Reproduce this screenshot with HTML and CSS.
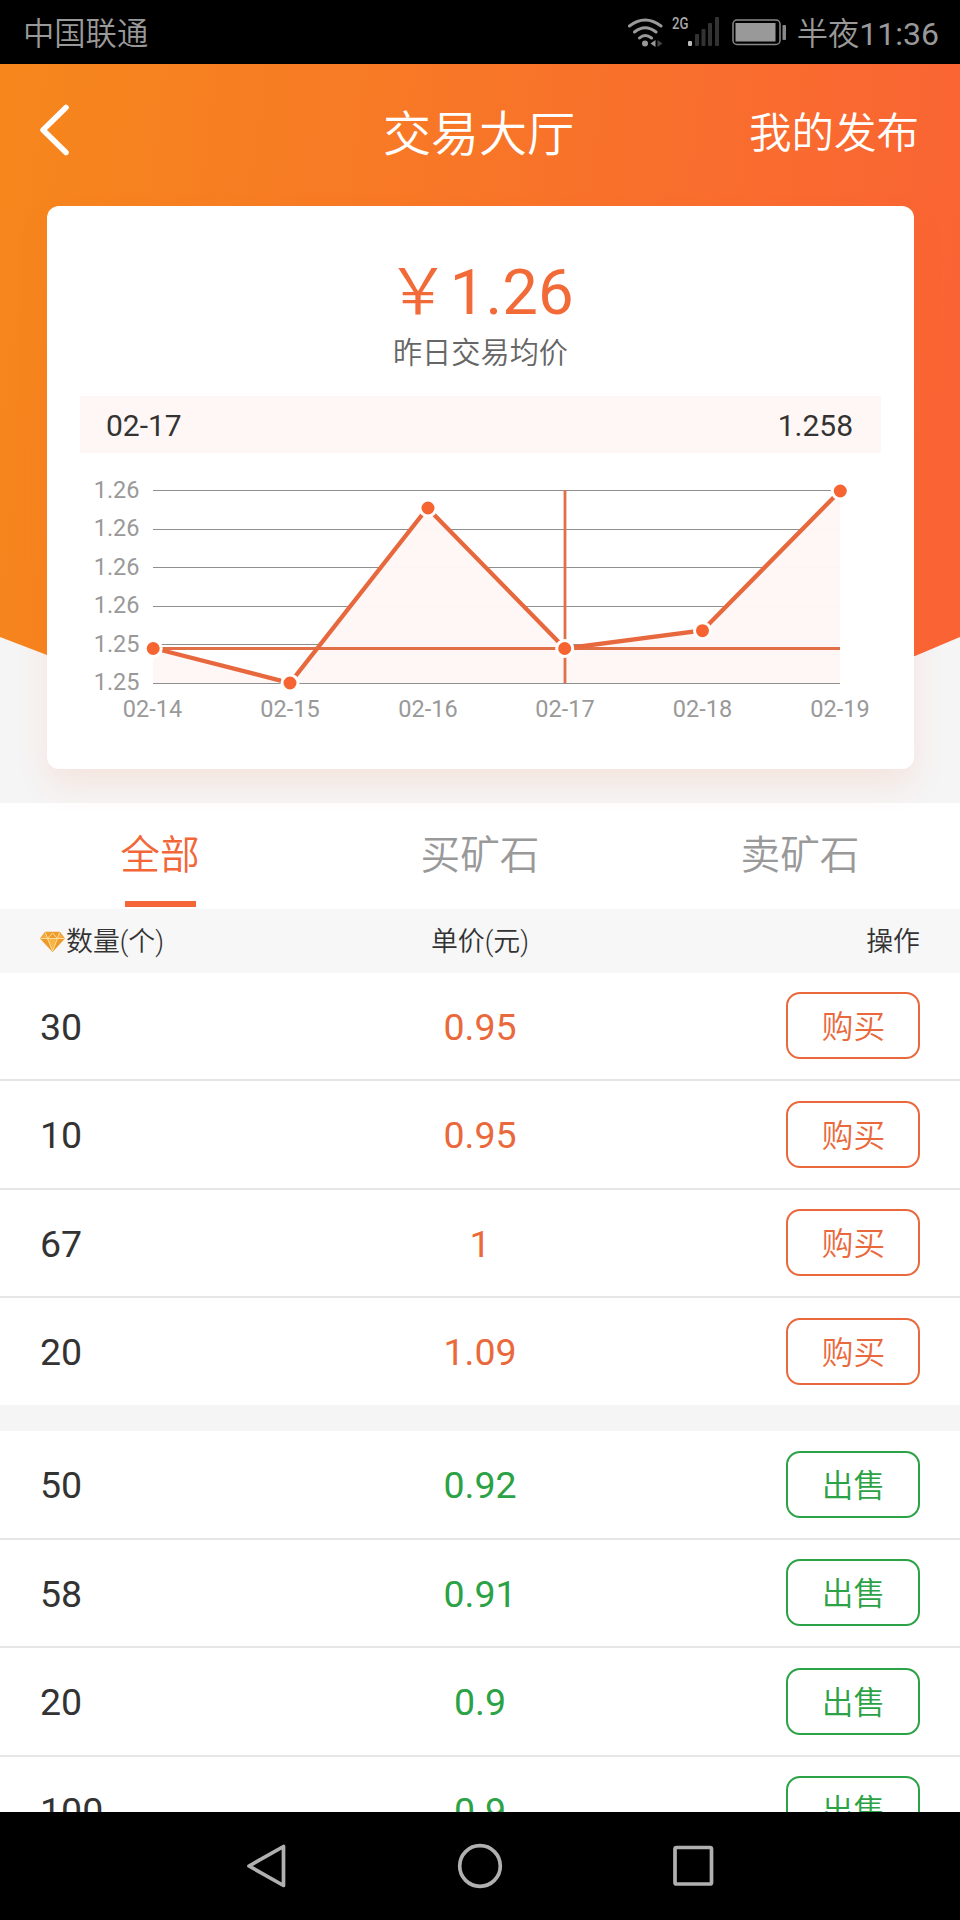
FILE: index.html
```
<!DOCTYPE html>
<html lang="zh-CN">
<head>
<meta charset="utf-8">
<title>交易大厅</title>
<link rel="stylesheet" href="styles.css">
</head>
<body>
<div class="screen">
  <div class="status">
    <span class="carrier">中国联通</span>
    <svg class="wifi" width="38" height="32" viewBox="0 0 38 32" fill="none" stroke="#999" stroke-width="3" stroke-linecap="round">
      <path d="M2.500 9Q18 -3 34 9M7.500 15Q18 6.500 29 15M12.500 21Q18 16 24.500 21"/>
      <circle cx="18" cy="26.500" r="3" fill="#999" stroke="none"/>
      <path d="M28.500 23v7l-5-3.500z" fill="#999" stroke="none"/>
      <path d="M30.500 23v7l5-3.500z" fill="#444" stroke="none"/>
    </svg>
    <span class="net">2G</span>
    <svg class="signal" width="32" height="32" viewBox="0 0 32 32" fill="#333">
      <rect x="0" y="25" width="4" height="5" rx="1" fill="#bbb"/>
      <rect x="7" y="18" width="4" height="12" rx="1"/>
      <rect x="13.500" y="13" width="4" height="17" rx="1"/>
      <rect x="20" y="7" width="4" height="23" rx="1"/>
      <rect x="27" y="1" width="4" height="29" rx="1"/>
    </svg>
    <svg class="battery" width="56" height="27" viewBox="0 0 56 27">
      <rect x="1" y="1" width="47" height="24.500" rx="4" fill="none" stroke="#888" stroke-width="1.500"/>
      <rect x="3.500" y="4" width="40" height="18.500" fill="#999"/>
      <rect x="50.500" y="6" width="3.500" height="15" rx="1" fill="#888"/>
    </svg>
    <span class="clock">半夜<span class="digits">11:36</span></span>
  </div>

  <div class="hero">
    <div class="titlebar">
      <svg class="back" width="34" height="54" viewBox="0 0 34 54" fill="none" stroke="#fff" stroke-width="5.500" stroke-linecap="round" stroke-linejoin="round"><path d="M29 4.500L6 27L29 49.500"/></svg>
      <h1 class="title">交易大厅</h1>
      <span class="mine">我的发布</span>
    </div>
    <div class="card">
      <div class="price"><span class="yen">￥</span>1.26</div>
      <div class="caption">昨日交易均价</div>
      <div class="readout"><span>02-17</span><span>1.258</span></div>
      <svg class="chart" width="866" height="270" viewBox="47 460 866 270">
        <path class="grid" d="M153 490.500H840M153 529.500H840M153 567.500H840M153 606.500H840M153 644.500H840"/>
        <path class="area" d="M153 648L290 683L427.500 508L565 648.500L702.500 630.500L840 491V683H153Z"/>
        <path class="grid" d="M153 683.500H840"/>
        <path class="cross" d="M153 648.500H840M565 490V683"/>
        <path class="line" d="M153 648L290 683L427.500 508L565 648.500L702.500 630.500L840 491"/>
        <g class="dots">
          <circle cx="153.200" cy="648.500" r="8"/><circle cx="290" cy="683" r="8"/><circle cx="428" cy="508" r="8"/>
          <circle cx="564.700" cy="648.500" r="8"/><circle cx="702.500" cy="630.700" r="8"/><circle cx="840.300" cy="491" r="8"/>
        </g>
        <g class="ylab">
          <text x="139.500" y="497.500">1.26</text><text x="139.500" y="536">1.26</text><text x="139.500" y="575">1.26</text>
          <text x="139.500" y="613">1.26</text><text x="139.500" y="651.500">1.25</text><text x="139.500" y="690">1.25</text>
        </g>
        <g class="xlab">
          <text x="152.500" y="716.500">02-14</text><text x="290" y="716.500">02-15</text><text x="428" y="716.500">02-16</text>
          <text x="565" y="716.500">02-17</text><text x="702.500" y="716.500">02-18</text><text x="840" y="716.500">02-19</text>
        </g>
      </svg>
    </div>
  </div>

  <div class="tabs">
    <div class="tab active">全部</div>
    <div class="tab">买矿石</div>
    <div class="tab">卖矿石</div>
  </div>

  <div class="row head">
    <div class="qty">
      <svg class="gem" width="25" height="21" viewBox="0 0 25 21">
        <path d="M5.500 1.500H19.500L24 7.500L12.500 20L1 7.500Z" fill="#ee9a2c" stroke="#ee9a2c" stroke-width="1.500" stroke-linejoin="round"/>
        <path d="M7.500 8H17.500L12.500 20Z" fill="#f8b444"/>
        <path d="M5.500 1.500L1 7.500H7.500ZM19.500 1.500L24 7.500H17.500Z" fill="#f5ab40"/>
        <path d="M1 7.500H24M5.500 1.500L7.500 7.500L12.500 2L17.500 7.500L19.500 1.500M7.500 7.500L12.500 20L17.500 7.500" fill="none" stroke="#fde3a4" stroke-width=".9"/>
      </svg>数量(个)</div>
    <div class="unit">单价(元)</div>
    <div class="op">操作</div>
  </div>

  <div class="list">
    <div class="group buy">
      <div class="row"><div class="qty">30</div><div class="unit">0.95</div><div class="op"><span class="btn">购买</span></div></div>
      <div class="row"><div class="qty">10</div><div class="unit">0.95</div><div class="op"><span class="btn">购买</span></div></div>
      <div class="row"><div class="qty">67</div><div class="unit">1</div><div class="op"><span class="btn">购买</span></div></div>
      <div class="row"><div class="qty">20</div><div class="unit">1.09</div><div class="op"><span class="btn">购买</span></div></div>
    </div>
    <div class="group sell">
      <div class="row"><div class="qty">50</div><div class="unit">0.92</div><div class="op"><span class="btn">出售</span></div></div>
      <div class="row"><div class="qty">58</div><div class="unit">0.91</div><div class="op"><span class="btn">出售</span></div></div>
      <div class="row"><div class="qty">20</div><div class="unit">0.9</div><div class="op"><span class="btn">出售</span></div></div>
      <div class="row"><div class="qty">100</div><div class="unit">0.9</div><div class="op"><span class="btn">出售</span></div></div>
    </div>
  </div>

  <div class="nav">
    <svg width="48" height="48" viewBox="0 0 48 48"><path d="M41.500 4.500V43.500L7 24Z"/></svg>
    <svg width="48" height="48" viewBox="0 0 48 48"><circle cx="24" cy="24" r="20.300"/></svg>
    <svg width="48" height="48" viewBox="0 0 48 48"><rect x="5" y="5.500" width="36.500" height="36.500" rx="1.500"/></svg>
  </div>
</div>
</body>
</html>
```
FILE: styles.css
```
* { box-sizing: border-box; }
body { margin: 0; font-family: Roboto, "Noto Sans CJK SC", sans-serif; color: #333; }
.screen { width: 960px; height: 1920px; display: flex; flex-direction: column; overflow: hidden; background: #f5f5f5; }
.status { height: 64px; flex: none; background: #000; color: #999; display: flex; align-items: center; padding: 0 21px 0 23px; font-size: 31.300px; font-weight: 350; line-height: 62px; }
.carrier { margin-right: auto; padding-top: 5px; }
.wifi { margin: 1px 7px 0 0; }
.net { font: 500 16.500px/16px Roboto, sans-serif; width: 16px; margin-top: -17px; color: #aaa; transform: scaleX(.8); transform-origin: left; }
.signal { margin-right: 12px; }
.battery { margin-right: 9px; }
.clock { padding-top: 4px; }
.digits { font-weight: 400; font-size: 32px; }

.hero { height: 739px; flex: none; position: relative; z-index: 0; }
.hero::before { content: ""; position: absolute; z-index: -1; inset: 0 0 143px; background: linear-gradient(97deg, #f6871c, #fa6434 96%); clip-path: polygon(0 0, 100% 0, 100% 573px, 915px 592px, 50% 100%, 47px 591px, 0 573px); }
.titlebar { height: 142px; display: grid; grid-template-columns: 1fr auto 1fr; align-items: center; padding: 0 41px 0 39px; color: #fff; font-family: "Noto Sans CJK SC", sans-serif; font-weight: 350; }
.back { margin: -10px 0 0 -2px; }
.title { margin: -10px 0 0; font-size: 48px; font-weight: 350; line-height: 60px; }
.mine { justify-self: end; font-size: 42.500px; line-height: 60px; margin-top: -11px; }
.card { margin: 0 46px 0 47px; height: 563px; border-radius: 12px; background: #fff; box-shadow: 0 16px 32px rgba(250, 100, 50, .11); padding-top: 51px; }
.price { height: 72px; line-height: 72px; text-align: center; font-size: 63.500px; color: #f26a37; }
.yen { font-weight: 350; margin-left: -1px; }
.caption { height: 50px; line-height: 49px; text-align: center; font-size: 29.200px; font-weight: 350; color: #666; }
.readout { margin: 17px 33px 0 33px; height: 57px; line-height: 59px; padding: 0 28px 0 26px; background: #fff7f5; display: flex; justify-content: space-between; font-size: 30px; color: #333; }
.chart { display: block; margin-top: 7px; overflow: visible; }
.area { fill: #fff7f6; fill-opacity: .98; }
.grid { stroke: #8f8f8f; stroke-width: 1; fill: none; }
.cross { stroke: #e07048; stroke-width: 2.800; fill: none; }
.line { stroke: #e8683e; stroke-width: 4.300; fill: none; }
.dots { fill: #f66531; stroke: #fff; stroke-width: 3; }
.ylab, .xlab { font-size: 23.500px; fill: #999; }
.ylab { text-anchor: end; }
.xlab { text-anchor: middle; }

.tabs { height: 106px; flex: none; background: #fff; display: flex; }
.tab { flex: 1; display: flex; flex-direction: column; align-items: center; font-size: 39.700px; font-weight: 350; line-height: 58px; padding-top: 24px; color: #999; }
.tab.active { color: #f26637; }
.tab.active::after { content: ""; width: 71px; height: 6px; background: #f46538; margin-top: 16px; }

.row { display: grid; grid-template-columns: 1fr 1fr 1fr; align-items: center; padding: 0 40px; height: 108.500px; background: #fff; font-size: 37.500px; border-bottom: 2px solid #e6e6e6; }
.row:last-child { border-bottom: 0; height: 106.500px; }
.list .qty, .list .unit { padding-top: 2px; }
.unit { text-align: center; }
.op { display: flex; justify-content: flex-end; }
.row.head { height: 63.500px; flex: none; border: 0; background: #f7f7f7; font-size: 26.900px; font-weight: 350; line-height: 38px; padding-top: 2px; }
.head .qty { display: flex; align-items: center; }
.gem { margin-right: 1px; }
.list { flex: 1; min-height: 0; overflow: hidden; }
.group + .group { margin-top: 26.500px; }
.buy .unit, .buy .btn { color: #ea693c; }
.sell .unit, .sell .btn { color: #2ba245; }
.btn { width: 134px; height: 67px; border: 2px solid currentColor; border-radius: 14px; text-align: center; line-height: 68px; font-size: 31.700px; font-weight: 350; padding-left: 1px; }

.nav { height: 108px; flex: none; background: #000; display: flex; align-items: center; justify-content: center; gap: 166px; }
.nav svg { fill: none; stroke: #b0b0b0; stroke-width: 3.700; stroke-linejoin: round; }
```
